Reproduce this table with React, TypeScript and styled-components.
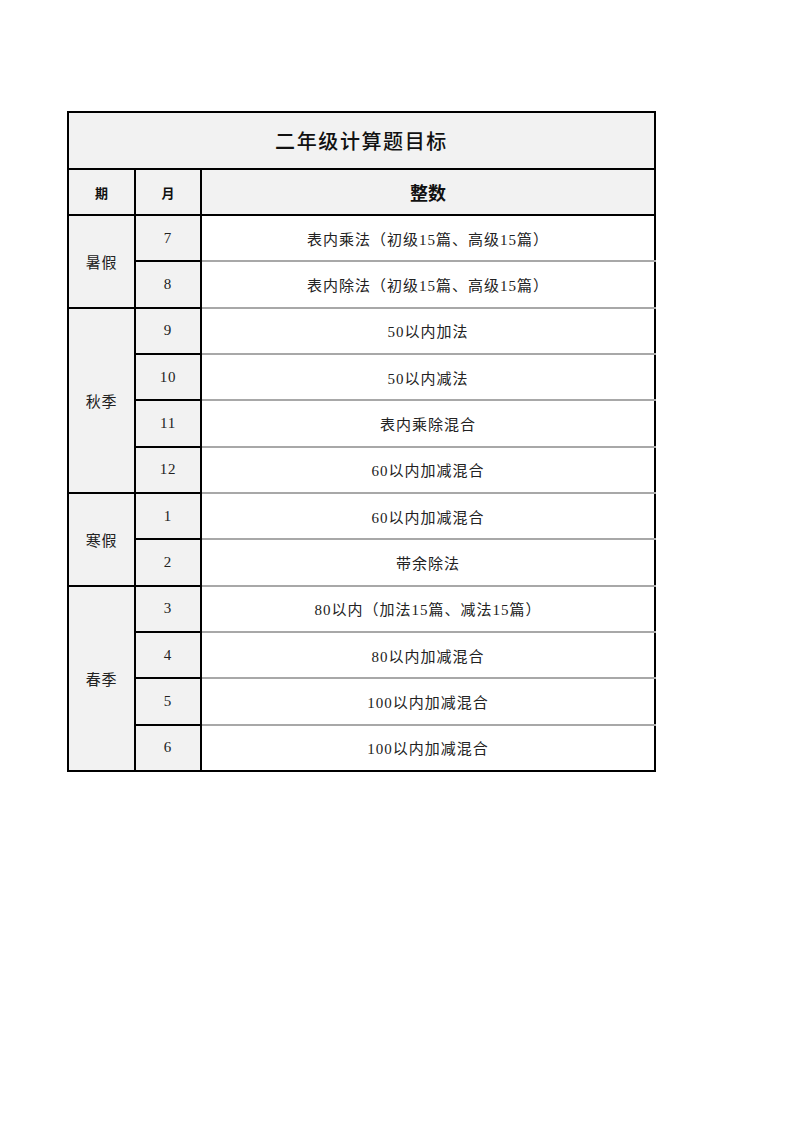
import styled, { createGlobalStyle } from 'styled-components'

const GlobalStyle = createGlobalStyle`
    body {
        margin: 0;
        background: #fff;
        font-family: "Liberation Serif", "Noto Sans CJK SC", serif;
    }
`

const Page = styled.div`
    padding: 111px 0 0 67px;
    height: 1132px;
    box-sizing: border-box;
`

const Table = styled.table`
    border-collapse: collapse;
    width: 589px;
    table-layout: fixed;
    border: 2px solid #000;
`

const TitleCell = styled.th`
    height: 55px;
    padding: 0;
    background: #f2f2f2;
    border: 2px solid #000;
    font-family: "Noto Sans CJK SC", sans-serif;
    font-size: 20px;
    font-weight: 500;
    letter-spacing: 1.6px;
    color: #111;
`

const HeadCell = styled.th<{ $big?: boolean }>`
    height: 44px;
    padding: 0;
    background: #f2f2f2;
    border: 2px solid #000;
    font-family: "Noto Sans CJK SC", sans-serif;
    font-size: ${p => (p.$big ? '18px' : '13px')};
    font-weight: 700;
    color: #111;
`

const Row = styled.tr`
    height: 46.33px;
`

const Cell = styled.td<{ $shade?: boolean }>`
    padding: 0;
    text-align: center;
    vertical-align: middle;
    background: ${p => (p.$shade ? '#f2f2f2' : '#fff')};
    border: 2px solid #000;
    font-size: 15px;
    letter-spacing: 0.8px;
    color: #222;
`

const ContentCell = styled(Cell)<{ $last?: boolean }>`
    letter-spacing: 1px;
    border-top: 2px solid #a8a8a8;
    border-bottom: 2px solid ${p => (p.$last ? '#000' : '#a8a8a8')};
`

const groups = [
    {
        name: '暑假',
        rows: [
            ['7', '表内乘法（初级15篇、高级15篇）'],
            ['8', '表内除法（初级15篇、高级15篇）'],
        ],
    },
    {
        name: '秋季',
        rows: [
            ['9', '50以内加法'],
            ['10', '50以内减法'],
            ['11', '表内乘除混合'],
            ['12', '60以内加减混合'],
        ],
    },
    {
        name: '寒假',
        rows: [
            ['1', '60以内加减混合'],
            ['2', '带余除法'],
        ],
    },
    {
        name: '春季',
        rows: [
            ['3', '80以内（加法15篇、减法15篇）'],
            ['4', '80以内加减混合'],
            ['5', '100以内加减混合'],
            ['6', '100以内加减混合'],
        ],
    },
]

export default function App() {
    return (
        <>
            <GlobalStyle />
            <Page>
                <Table>
                    <colgroup>
                        <col style={{ width: 67 }} />
                        <col style={{ width: 66 }} />
                        <col />
                    </colgroup>
                    <thead>
                        <tr>
                            <TitleCell colSpan={3}>二年级计算题目标</TitleCell>
                        </tr>
                        <tr>
                            <HeadCell>期</HeadCell>
                            <HeadCell>月</HeadCell>
                            <HeadCell $big>整数</HeadCell>
                        </tr>
                    </thead>
                    <tbody>
                        {groups.map((g, gi) =>
                            g.rows.map(([month, text], i) => (
                                <Row key={g.name + month}>
                                    {i === 0 && (
                                        <Cell $shade rowSpan={g.rows.length}>{g.name}</Cell>
                                    )}
                                    <Cell $shade>{month}</Cell>
                                    <ContentCell $last={gi === groups.length - 1 && i === g.rows.length - 1}>
                                        {text}
                                    </ContentCell>
                                </Row>
                            ))
                        )}
                    </tbody>
                </Table>
            </Page>
        </>
    )
}
